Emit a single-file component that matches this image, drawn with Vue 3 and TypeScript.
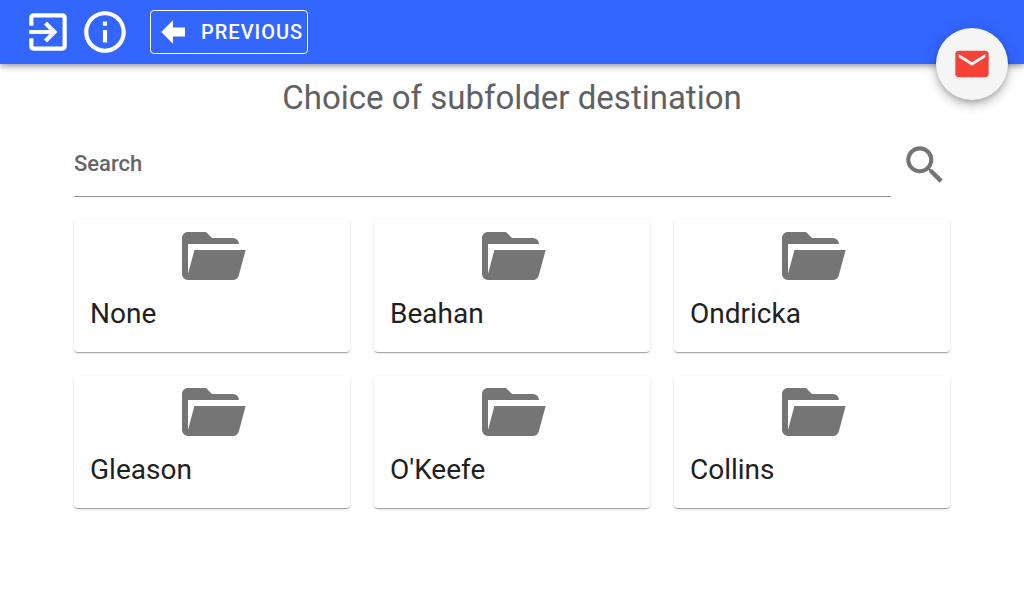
<script setup lang="ts">
import { ref } from 'vue'

interface Folder {
  id: number
  name: string
}

const query = ref('')
const folders: Folder[] = ['None', 'Beahan', 'Ondricka', 'Gleason', "O'Keefe", 'Collins'].map(
  (name, id) => ({ id, name }),
)
</script>

<template>
  <div class="page">
    <header class="toolbar">
      <button class="icon-button" type="button" aria-label="Exit">
        <svg viewBox="0 0 24 24" class="icon">
          <path d="M10.09 15.59 11.5 17l5-5-5-5-1.41 1.41L12.67 11H3v2h9.67l-2.58 2.59zM19 3H5c-1.11 0-2 .9-2 2v4h2V5h14v14H5v-4H3v4c0 1.1.89 2 2 2h14c1.1 0 2-.9 2-2V5c0-1.1-.9-2-2-2z" />
        </svg>
      </button>
      <button class="icon-button" type="button" aria-label="Information">
        <svg viewBox="0 0 24 24" class="icon">
          <path d="M11 7h2v2h-2zm0 4h2v6h-2zm1-9C6.48 2 2 6.48 2 12s4.48 10 10 10 10-4.48 10-10S17.52 2 12 2zm0 18c-4.41 0-8-3.59-8-8s3.59-8 8-8 8 3.59 8 8-3.59 8-8 8z" />
        </svg>
      </button>
      <button class="previous" type="button">
        <svg viewBox="0 0 24 24" class="arrow" aria-hidden="true">
          <path d="M20 9v6h-8v4.84L4.16 12 12 4.16V9z" />
        </svg>
        <span>PREVIOUS</span>
      </button>
      <button class="mail" type="button" aria-label="Messages">
        <svg viewBox="0 0 24 24" class="mail-icon">
          <path d="M20 4H4c-1.1 0-1.99.9-1.99 2L2 18c0 1.1.9 2 2 2h16c1.1 0 2-.9 2-2V6c0-1.1-.9-2-2-2zm0 4-8 5-8-5V6l8 5 8-5v2z" />
        </svg>
      </button>
    </header>

    <main class="content">
      <h1 class="title">Choice of subfolder destination</h1>
      <form class="search" role="search" @submit.prevent>
        <input v-model="query" class="field" type="text" placeholder="Search" aria-label="Search" />
        <button class="icon-button" type="submit" aria-label="Run search">
          <svg viewBox="0 0 24 24" class="icon">
            <path d="M15.5 14h-.79l-.28-.27A6.471 6.471 0 0 0 16 9.5 6.5 6.5 0 1 0 9.5 16c1.61 0 3.09-.59 4.23-1.57l.27.28v.79l5 4.99L20.49 19l-4.99-5zm-6 0C7.01 14 5 11.99 5 9.5S7.01 5 9.5 5 14 7.01 14 9.5 11.99 14 9.5 14z" />
          </svg>
        </button>
      </form>
      <div class="folders">
        <button v-for="folder in folders" :key="folder.id" class="card" type="button">
          <svg viewBox="0 0 24 24" class="folder-icon" aria-hidden="true">
            <path d="M19 20H4a2 2 0 0 1-2-2V6c0-1.11.89-2 2-2h6l2 2h7a2 2 0 0 1 2 2H4v10l2.14-8h17.07l-2.28 8.5c-.23.87-1.01 1.5-1.93 1.5z" />
          </svg>
          <span class="name">{{ folder.name }}</span>
        </button>
      </div>
    </main>
  </div>
</template>

<style>
body {
  background: #fff;
}
</style>

<style scoped>
.page {
  font-family: Roboto, sans-serif;
  color: #212121;
}

button,
input {
  box-sizing: border-box;
  margin: 0;
  padding: 0;
  border: 0;
  background: none;
  color: inherit;
  font: inherit;
}

button {
  cursor: pointer;
}

svg {
  display: block;
  fill: currentColor;
}

.toolbar {
  position: relative;
  display: flex;
  align-items: center;
  gap: 7px;
  height: 64px;
  padding: 0 23px;
  background: #3366ff;
  color: #fff;
  box-shadow:
    0 2px 4px -1px rgba(0, 0, 0, 0.2),
    0 4px 5px 0 rgba(0, 0, 0, 0.14),
    0 1px 10px 0 rgba(0, 0, 0, 0.12);
}

.icon-button {
  flex: none;
}

.icon {
  width: 50px;
  height: 50px;
}

.previous {
  display: flex;
  align-items: center;
  gap: 10px;
  height: 44px;
  margin-left: 13px;
  padding: 0 4px;
  border: 1px solid #fff;
  border-radius: 4px;
  font-size: 20px;
  font-weight: 500;
  letter-spacing: 1px;
}

.arrow {
  width: 36px;
  height: 36px;
}

.mail {
  position: absolute;
  top: 28px;
  right: 16px;
  display: grid;
  place-items: center;
  width: 72px;
  height: 72px;
  border-radius: 50%;
  background: #f5f5f5;
  color: #f44336;
  box-shadow:
    0 3px 5px -1px rgba(0, 0, 0, 0.2),
    0 6px 10px 0 rgba(0, 0, 0, 0.14),
    0 1px 18px 0 rgba(0, 0, 0, 0.12);
}

.mail-icon {
  width: 40px;
  height: 40px;
}

.content {
  padding: 12px 74px 24px;
}

.title {
  margin: 0;
  font-size: 33px;
  font-weight: 400;
  line-height: 44px;
  text-align: center;
  color: #616161;
}

.search {
  display: flex;
  gap: 9px;
  margin-top: 10px;
  color: #757575;
}

.field {
  flex: 1;
  min-width: 0;
  height: 67px;
  border-bottom: 1px solid #8e8e8e;
  border-radius: 0;
  outline: none;
  font-size: 22px;
  font-weight: 500;
}

.field::placeholder {
  color: #666;
  opacity: 1;
}

.search .icon-button {
  align-self: center;
  padding-top: 2px;
}

.folders {
  display: grid;
  grid-template-columns: repeat(3, 1fr);
  gap: 24px;
  margin-top: 23px;
}

.card {
  display: flex;
  flex-direction: column;
  align-items: center;
  padding-bottom: 16px;
  border-radius: 4px;
  background: #fff;
  box-shadow:
    0 2px 1px -1px rgba(0, 0, 0, 0.2),
    0 1px 1px 0 rgba(0, 0, 0, 0.14),
    0 1px 3px 0 rgba(0, 0, 0, 0.12);
}

.folder-icon {
  width: 72px;
  height: 72px;
  color: #757575;
}

.name {
  align-self: stretch;
  padding: 0 16px;
  font-size: 28px;
  line-height: 44px;
  text-align: left;
}
</style>
